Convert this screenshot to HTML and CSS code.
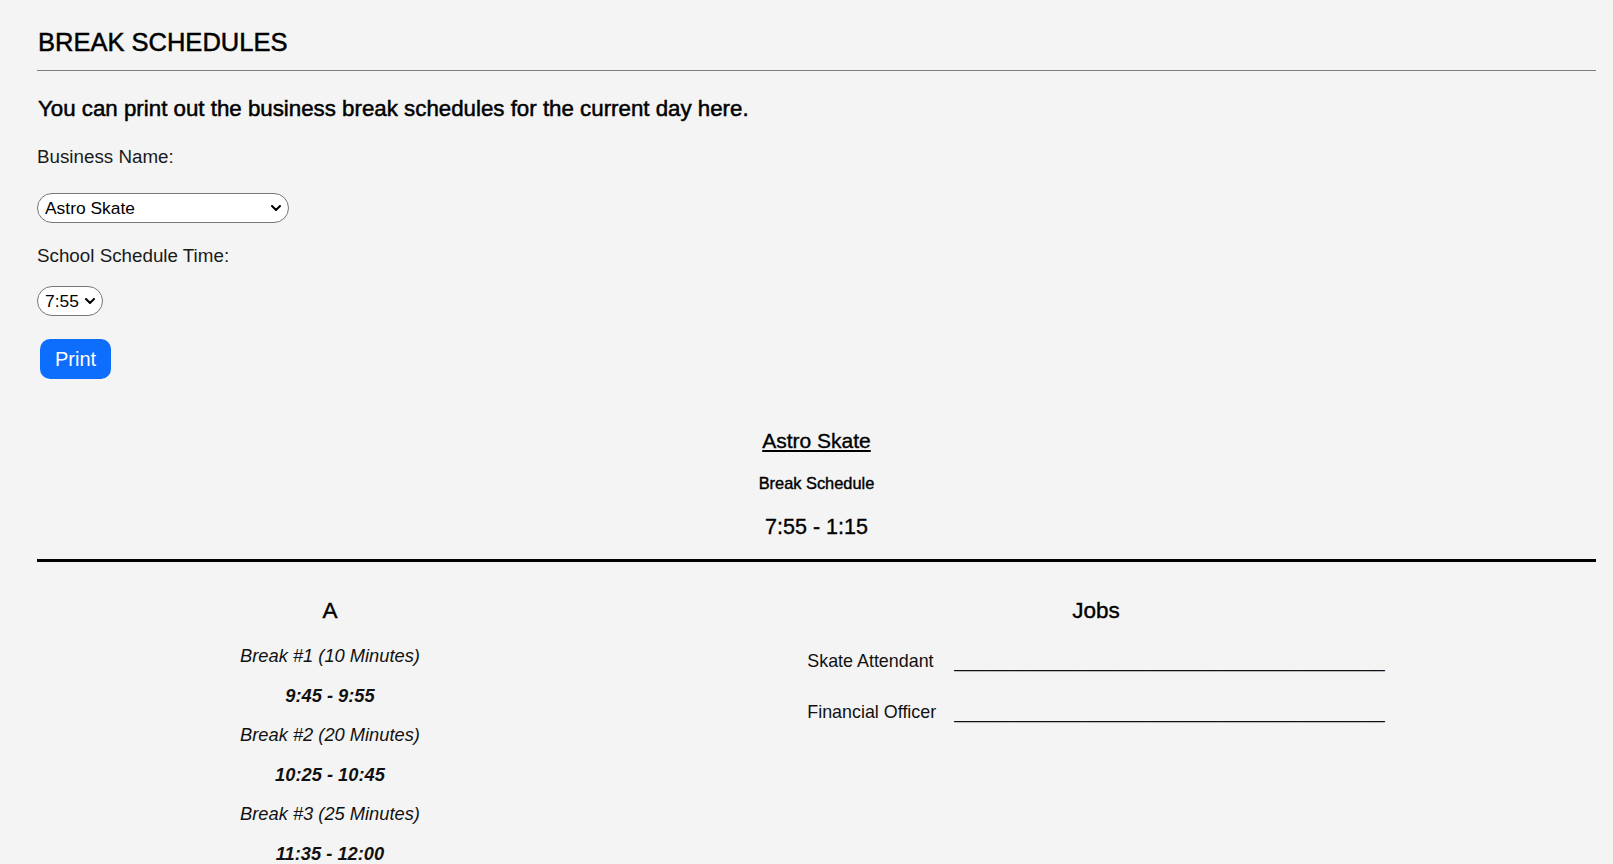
FILE: index.html
```html
<!DOCTYPE html>
<html lang="en">
<head>
<meta charset="utf-8">
<title>Break Schedules</title>
<link rel="stylesheet" href="styles.css">
</head>
<body>
<div class="page">
  <h1 class="title">BREAK SCHEDULES</h1>
  <hr class="rule">
  <p class="intro">You can print out the business break schedules for the current day here.</p>

  <label class="label" for="biz">Business Name:</label>
  <div class="select-wrap select-wide">
    <select id="biz" class="select"><option>Astro Skate</option></select>
    <svg class="chev" viewBox="0 0 10 6" width="10" height="6" aria-hidden="true"><path d="M1 1l4 4 4-4" fill="none" stroke="#000" stroke-width="2" stroke-linecap="round" stroke-linejoin="round"/></svg>
  </div>

  <label class="label" for="time">School Schedule Time:</label>
  <div class="select-wrap select-narrow">
    <select id="time" class="select"><option>7:55</option></select>
    <svg class="chev" viewBox="0 0 10 6" width="10" height="6" aria-hidden="true"><path d="M1 1l4 4 4-4" fill="none" stroke="#000" stroke-width="2" stroke-linecap="round" stroke-linejoin="round"/></svg>
  </div>

  <button class="btn-print" type="button">Print</button>

  <section class="sheet">
    <h2 class="sheet-biz">Astro Skate</h2>
    <h3 class="sheet-sub">Break Schedule</h3>
    <h3 class="sheet-time">7:55 - 1:15</h3>
    <hr class="thick">
    <div class="cols">
      <div class="col col-breaks">
        <h4 class="col-head">A</h4>
        <div class="break-list">
          <p class="brk">Break #1 (10 Minutes)</p>
          <p class="tm">9:45 - 9:55</p>
          <p class="brk">Break #2 (20 Minutes)</p>
          <p class="tm">10:25 - 10:45</p>
          <p class="brk">Break #3 (25 Minutes)</p>
          <p class="tm">11:35 - 12:00</p>
        </div>
      </div>
      <div class="col col-jobs">
        <h4 class="col-head">Jobs</h4>
        <table class="jobs">
          <tr><td class="job">Skate Attendant</td><td class="blank">____________________________________________</td></tr>
          <tr><td class="job">Financial Officer</td><td class="blank">____________________________________________</td></tr>
        </table>
      </div>
    </div>
  </section>
</div>
</body>
</html>
```

FILE: styles.css
```css
html, body {
  margin: 0;
  padding: 0;
  background: #f4f4f4;
}

body {
  font-family: "Liberation Sans", Arial, sans-serif;
  color: #111;
}

.page {
  padding: 27px 17px 40px 37px;
}

.title {
  margin: 0 0 13px 1px;
  font-size: 25.5px;
  line-height: 30px;
  font-weight: 400;
  color: #000;
  -webkit-text-stroke: 0.5px #000;
}

.rule {
  margin: 0;
  border: 0;
  border-top: 1px solid #7d7d7d;
  height: 0;
}

.intro {
  margin: 25px 0 0 1px;
  font-size: 22.3px;
  line-height: 26px;
  color: #000;
  -webkit-text-stroke: 0.5px #000;
}

.label {
  display: block;
  margin: 24px 0 0 0;
  font-size: 18.8px;
  line-height: 22px;
  color: #1a1a1a;
}

.label + .select-wrap { margin-top: 25px; }
.select-wrap + .label { margin-top: 22px; }
.label[for="time"] + .select-wrap { margin-top: 19px; }

.select-wrap {
  position: relative;
  height: 30px;
}

.select-wide { width: 252px; }
.select-narrow { width: 66px; }

.select {
  appearance: none;
  -webkit-appearance: none;
  box-sizing: border-box;
  width: 100%;
  height: 100%;
  margin: 0;
  padding: 0 20px 0 7px;
  border: 1px solid #767676;
  border-radius: 15px;
  background: #fff;
  font-family: "Liberation Sans", Arial, sans-serif;
  font-size: 17.4px;
  color: #000;
}

.chev {
  position: absolute;
  right: 8px;
  top: 12px;
  pointer-events: none;
}

.btn-print {
  display: block;
  margin: 23px 0 0 3px;
  width: 71px;
  height: 40px;
  padding: 0;
  border: 0;
  border-radius: 10px;
  background: #0d6efd;
  color: #fff;
  font-family: "Liberation Sans", Arial, sans-serif;
  font-size: 20px;
}

.sheet {
  margin-top: 49px;
  text-align: center;
}

.sheet-biz {
  margin: 0;
  font-size: 21px;
  line-height: 25px;
  font-weight: 400;
  color: #000;
  text-decoration: underline;
  text-underline-offset: 2px;
  -webkit-text-stroke: 0.35px #000;
}

.sheet-sub {
  margin: 21px 0 0;
  font-size: 16.4px;
  line-height: 19px;
  font-weight: 400;
  color: #000;
  -webkit-text-stroke: 0.4px #000;
}

.sheet-time {
  margin: 22px 0 0;
  font-size: 21.5px;
  line-height: 25px;
  font-weight: 400;
  color: #000;
  -webkit-text-stroke: 0.35px #000;
}

.thick {
  margin: 19px 0 0;
  border: 0;
  border-top: 3px solid #000;
  height: 0;
}

.cols {
  display: grid;
  grid-template-columns: 586px 946px;
  padding-top: 36px;
}

.col {
  display: flex;
  flex-direction: column;
  align-items: center;
}

.col-head {
  margin: 0;
  font-size: 22.5px;
  line-height: 26px;
  font-weight: 400;
  color: #000;
  -webkit-text-stroke: 0.4px #000;
}

.break-list {
  margin-top: 12px;
}

.brk, .tm {
  margin: 0;
  font-size: 18.3px;
  line-height: 39.6px;
  font-style: italic;
  color: #111;
}

.tm {
  font-weight: 700;
}

.jobs {
  margin-top: 12px;
  border-collapse: collapse;
}

.jobs td {
  padding: 0;
  height: 51px;
  line-height: 51px;
  font-size: 17.9px;
  color: #111;
  text-align: left;
}

.jobs .blank {
  font-size: 17.6px;
}

.jobs .job {
  padding-right: 18px;
}
```
